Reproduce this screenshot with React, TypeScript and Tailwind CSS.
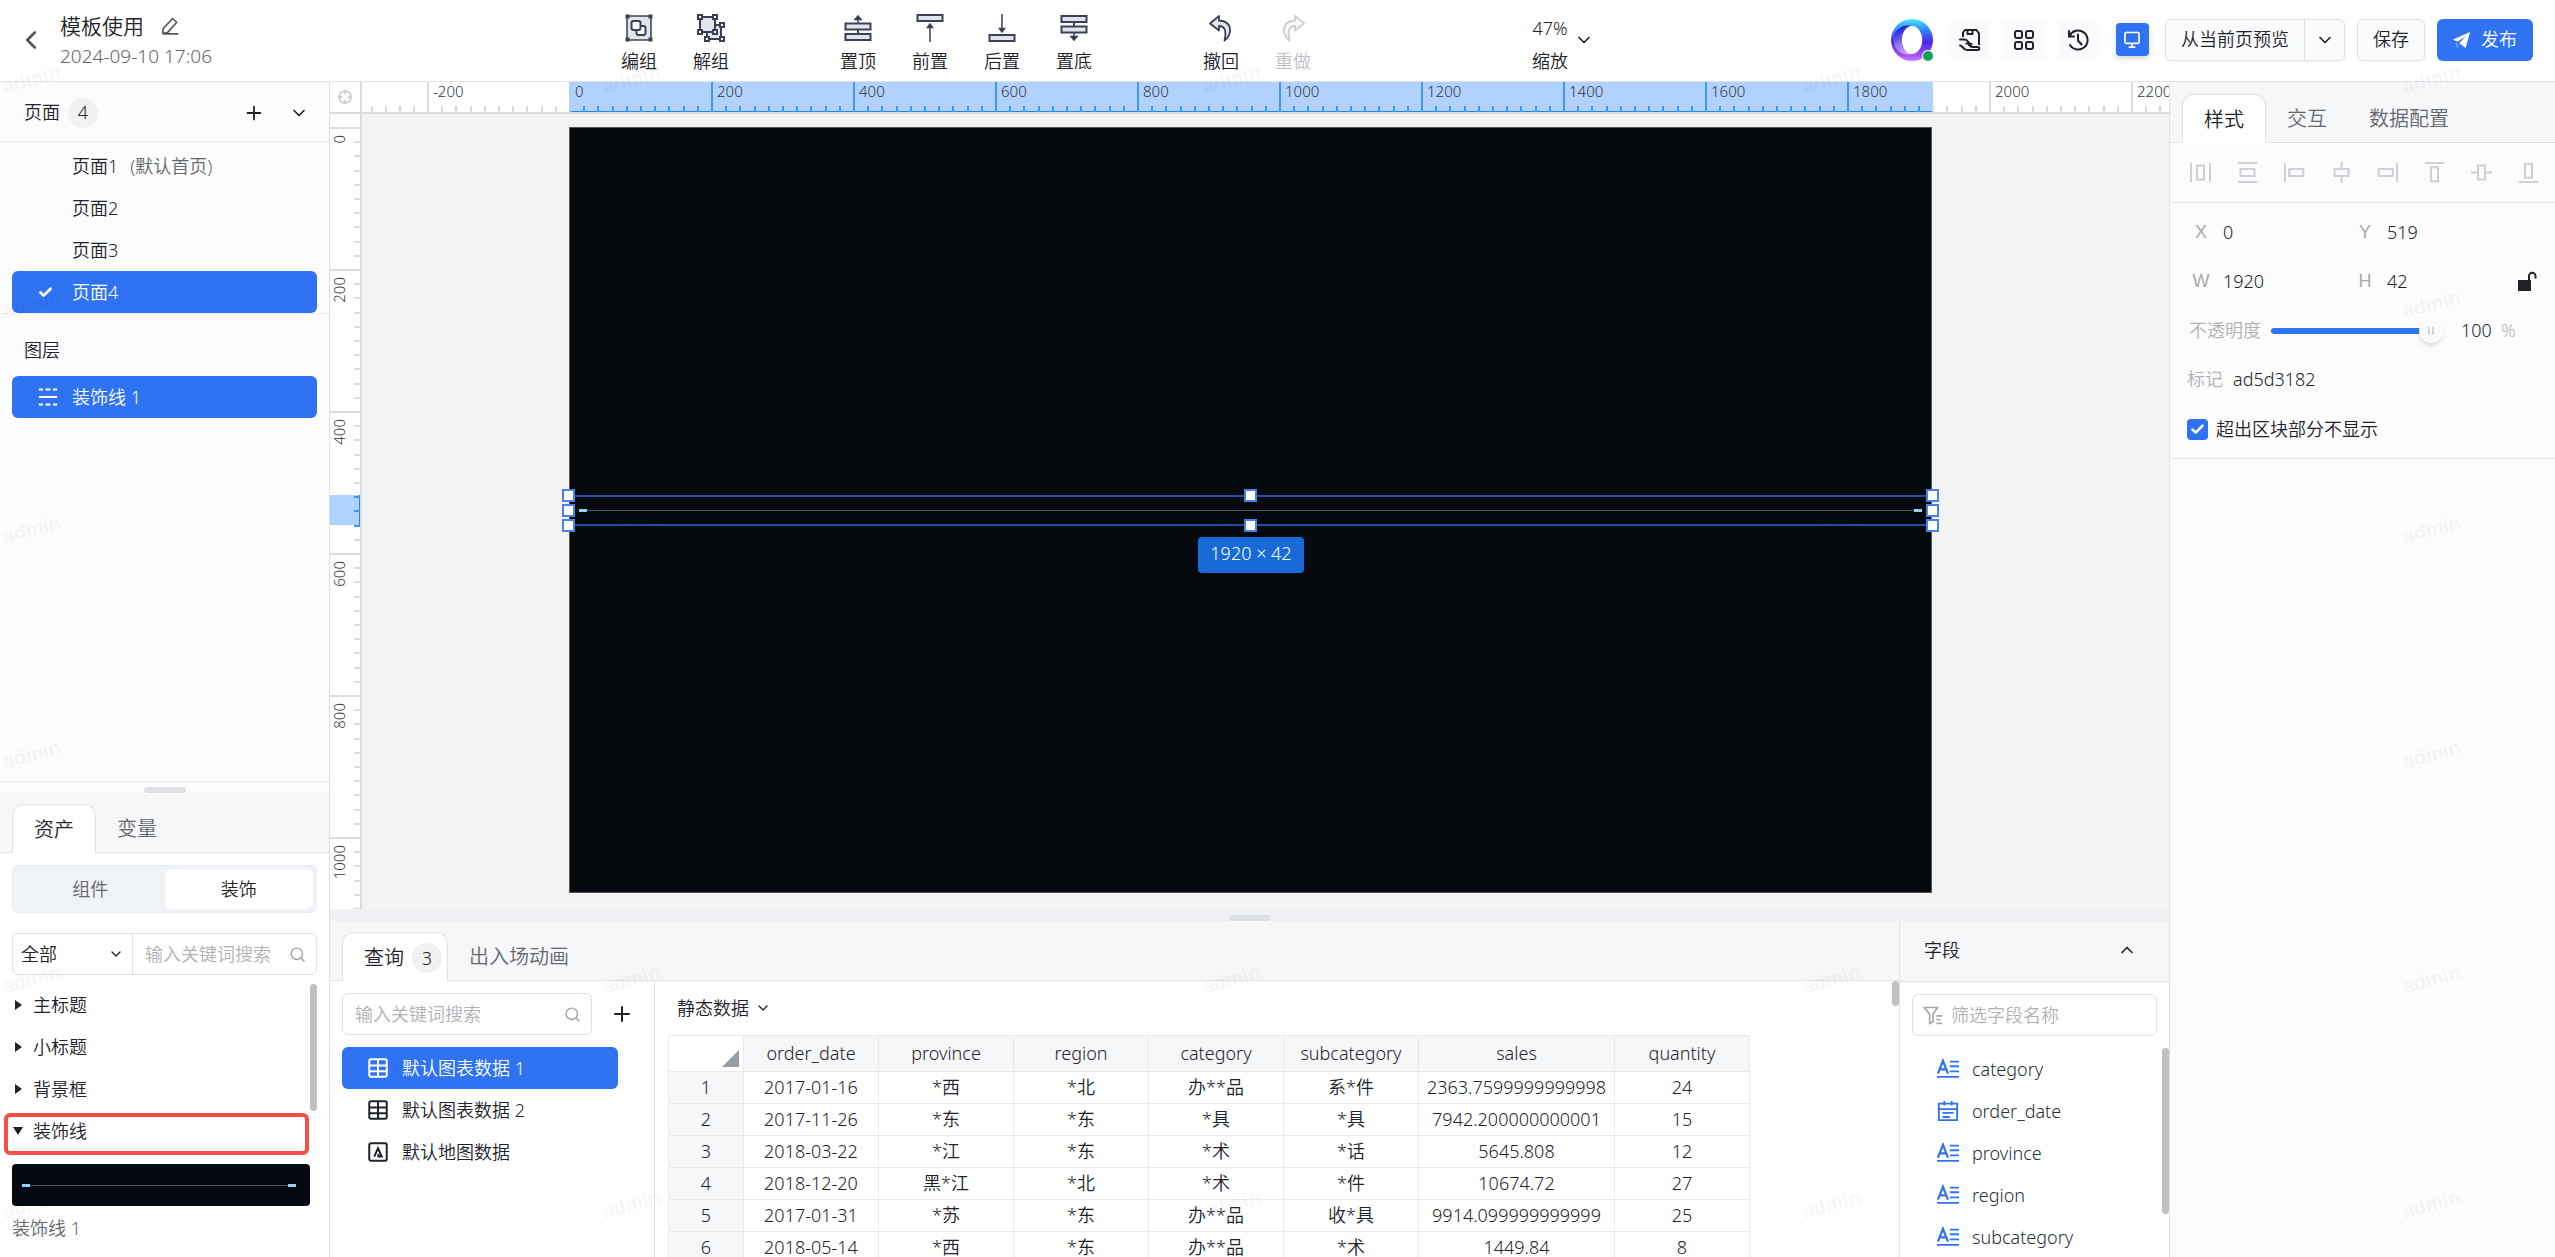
import React, { useState } from 'react';
import { Check, ChevronDown, ChevronLeft, ChevronUp, Plus, Search } from 'lucide-react';

const PAGES = ['页面1', '页面2', '页面3', '页面4'];
const CATEGORIES = ['主标题', '小标题', '背景框'];
const FIELDS = ['category', 'order_date', 'province', 'region', 'subcategory'];

const COLUMNS = ['order_date', 'province', 'region', 'category', 'subcategory', 'sales', 'quantity'];
const ROWS = [
    ['2017-01-16', '*西', '*北', '办**品', '系*件', '2363.7599999999998', '24'],
    ['2017-11-26', '*东', '*东', '*具', '*具', '7942.200000000001', '15'],
    ['2018-03-22', '*江', '*东', '*术', '*话', '5645.808', '12'],
    ['2018-12-20', '黑*江', '*北', '*术', '*件', '10674.72', '27'],
    ['2017-01-31', '*苏', '*东', '办**品', '收*具', '9914.099999999999', '25'],
    ['2018-05-14', '*西', '*东', '办**品', '*术', '1449.84', '8'],
];

interface IconProps {
    children: React.ReactNode;
    className?: string;
}

// two-tone icons of the top toolbar
const ToolIcon = ({ children, className = '' }: IconProps) => (
    <svg viewBox="0 0 28 28" className={`size-7 ${className}`} fill="#e1e4ea" stroke="#3b4056" strokeWidth="2">
        {children}
    </svg>
);

const LineIcon = ({ children, className = '' }: IconProps) => (
    <svg viewBox="0 0 24 24" className={className} fill="none" stroke="currentColor" strokeWidth="2">
        {children}
    </svg>
);

const Corner = ({ x, y, s = 4 }: { x: number; y: number; s?: number }) => (
    <rect x={x - s / 2} y={y - s / 2} width={s} height={s} fill="#3b4056" stroke="none" />
);

const Node = ({ x, y }: { x: number; y: number }) => (
    <rect x={x - 2} y={y - 2} width="4" height="4" fill="#fff" />
);

const GroupIcon = () => (
    <ToolIcon>
        <rect x="2" y="2" width="24" height="24" strokeWidth="1.5" />
        <rect x="11.5" y="12" width="9" height="9" rx="2" fill="#fff" />
        <rect x="6.5" y="7" width="9" height="9" rx="2" fill="#fff" />
        <Corner x={2.5} y={2.5} />
        <Corner x={25.5} y={2.5} />
        <Corner x={2.5} y={25.5} />
        <Corner x={25.5} y={25.5} />
    </ToolIcon>
);

const UngroupIcon = () => (
    <ToolIcon>
        <rect x="10" y="11" width="14" height="14" />
        <rect x="3" y="3" width="15" height="15" />
        <Node x={3} y={3} />
        <Node x={18} y={3} />
        <Node x={3} y={18} />
        <Node x={18} y={18} />
        <Node x={25} y={11} />
        <Node x={25} y={25} />
        <Node x={10} y={25} />
    </ToolIcon>
);

const TopIcon = () => (
    <ToolIcon>
        <path d="M14 9V3M11 5.500L14 2l3 3.500z" fill="#3b4056" strokeWidth="1.500" />
        <path d="M14 15v5" />
        <rect x="1.500" y="9.500" width="25" height="6" />
        <rect x="1.500" y="20" width="25" height="6" />
    </ToolIcon>
);

const ForwardIcon = () => (
    <ToolIcon>
        <rect x="1.500" y="1" width="25" height="6" />
        <path d="M14 28V11M11.500 13.500L14 10l2.500 3.500z" fill="#3b4056" strokeWidth="1.500" />
    </ToolIcon>
);

const BackwardIcon = () => (
    <ToolIcon>
        <rect x="1.500" y="21" width="25" height="6" />
        <path d="M14 0v17M11.500 14.500L14 18l2.500-3.500z" fill="#3b4056" strokeWidth="1.500" />
    </ToolIcon>
);

const BottomIcon = () => (
    <ToolIcon>
        <path d="M14 19v6M11 22.500l3 3.500 3-3.500z" fill="#3b4056" strokeWidth="1.500" />
        <path d="M14 8v5" />
        <rect x="1.500" y="2" width="25" height="6" />
        <rect x="1.500" y="12.500" width="25" height="6" />
    </ToolIcon>
);

const UndoIcon = ({ className = '' }: { className?: string }) => (
    <ToolIcon className={className}>
        <path
            d="M12 2L3 9.500l9 7v-4.500c5 0 8 3.500 5.500 14.500 7-5.500 9.500-19-5.500-20z"
            strokeWidth="1.800"
            strokeLinejoin="round"
        />
    </ToolIcon>
);

interface ToolProps {
    label: string;
    icon: React.ReactNode;
    disabled?: boolean;
}

const Tool = ({ label, icon, disabled }: ToolProps) => (
    <button disabled={disabled} className="flex w-18 flex-col items-center gap-1 disabled:text-[#bdbfc4]">
        {icon}
        <span className="leading-[30px]">{label}</span>
    </button>
);

const Logo = () => (
    <svg viewBox="0 0 42 42" className="mr-1 size-[42px]">
        <defs>
            <linearGradient id="ring" x1="0.5" y1="0" x2="0.5" y2="1">
                <stop offset="0" stopColor="#4fe3fb" />
                <stop offset="0.25" stopColor="#2f8df5" />
                <stop offset="0.55" stopColor="#4a23ee" />
                <stop offset="0.85" stopColor="#a34bf5" />
                <stop offset="1" stopColor="#c77dff" />
            </linearGradient>
            <linearGradient id="innerRing" x1="0.3" y1="0" x2="0.7" y2="1">
                <stop offset="0" stopColor="#1b12dd" />
                <stop offset="0.5" stopColor="#8d72ee" />
                <stop offset="1" stopColor="#e3b5fb" />
            </linearGradient>
        </defs>
        <circle cx="21" cy="21" r="21" fill="url(#ring)" />
        <circle cx="17" cy="21" r="14.500" fill="url(#innerRing)" />
        <ellipse cx="21" cy="21" rx="10" ry="14" fill="#fff" />
        <circle cx="37" cy="37" r="6" fill="#fff" />
        <circle cx="37" cy="37" r="5" fill="#0aa35c" />
    </svg>
);

const Header = () => (
    <header className="flex h-[82px] shrink-0 border-b border-[#e1e3e8] bg-white pb-0.5">
        <div className="flex w-[603px] shrink-0 items-center pl-4">
            <button aria-label="返回" className="text-[#55585e]">
                <ChevronLeft size={30} strokeWidth={2.2} />
            </button>
            <div className="ml-3.5">
                <div className="flex items-center gap-4 text-[21px] leading-8">
                    <h1>模板使用</h1>
                    <button aria-label="重命名" className="text-[#55585e]">
                        <LineIcon className="size-5">
                            <path d="M3 21l1-6L15 3l5 4.500L9 20l-6 1M3 21.500h19" strokeLinejoin="round" />
                        </LineIcon>
                    </button>
                </div>
                <p className="text-[19px] leading-7 text-[#64676d]">2024-09-10 17:06</p>
            </div>
        </div>
        <div className="flex items-start pt-3.5">
            <Tool label="编组" icon={<GroupIcon />} />
            <Tool label="解组" icon={<UngroupIcon />} />
            <div className="ml-[75px] flex">
                <Tool label="置顶" icon={<TopIcon />} />
                <Tool label="前置" icon={<ForwardIcon />} />
                <Tool label="后置" icon={<BackwardIcon />} />
                <Tool label="置底" icon={<BottomIcon />} />
            </div>
            <div className="ml-[75px] flex">
                <Tool label="撤回" icon={<UndoIcon />} />
                <Tool label="重做" icon={<UndoIcon className="-scale-x-100 opacity-25" />} disabled />
            </div>
            <button className="ml-[203px] flex items-center gap-1.5">
                <span className="flex flex-col items-center gap-1">
                    <span className="leading-7">47%</span>
                    <span className="leading-[30px]">缩放</span>
                </span>
                <ChevronDown size={20} strokeWidth={2} className="mb-2.5" />
            </button>
        </div>
        <div className="ml-auto flex items-center gap-3 pr-[22px]">
            <Logo />
            <IconButton label="素材">
                <LineIcon className="size-6">
                    <path d="M5 9V4.500L7 2h11.500L21 5.500V17M9.500 2v4h5V2" strokeLinejoin="round" />
                    <path
                        d="M2 11.500h4.500c3 0 3.500 2.500 6.500 5.500M8.500 15.500l5 .5M2 17.500c2.500 0 3.500 4.500 7 4.500h10.500c2.500 0 2.500-3 0-3H14c-1.500 0-2-1-3-2"
                        strokeLinecap="round"
                        strokeLinejoin="round"
                    />
                </LineIcon>
            </IconButton>
            <IconButton label="应用">
                <LineIcon className="size-6">
                    <rect x="3" y="3" width="7" height="7" rx="2" />
                    <rect x="14" y="3" width="7" height="7" rx="2" />
                    <rect x="3" y="14" width="7" height="7" rx="2" />
                    <rect x="14" y="14" width="7" height="7" rx="2" />
                </LineIcon>
            </IconButton>
            <IconButton label="历史">
                <LineIcon className="size-6">
                    <path d="M3.500 8A9.500 9.500 0 1 1 4 17M3 3v5.500h5M12 6.500v6l3.500 4" strokeLinecap="round" />
                </LineIcon>
            </IconButton>
            <IconButton label="大屏">
                <span className="flex size-[33px] items-center justify-center rounded bg-[#2f73f2] text-white shadow-md">
                    <LineIcon className="size-5">
                        <rect x="3.500" y="3" width="17" height="13" rx="1.500" />
                        <path d="M12 16v5M8 20.500h8" />
                    </LineIcon>
                </span>
            </IconButton>
            <div className="flex h-[42px] rounded-md border border-[#dcdfe4] bg-[#fafbfd] shadow-xs">
                <button className="w-[139px] border-r border-[#dcdfe4] text-center">从当前页预览</button>
                <button aria-label="预览选项" className="flex w-[39px] items-center justify-center">
                    <ChevronDown size={20} strokeWidth={2} />
                </button>
            </div>
            <button className="h-[42px] w-[68px] rounded-md border border-[#dcdfe4] bg-[#fafbfd] shadow-xs">保存</button>
            <button className="flex h-[42px] w-24 items-center justify-center gap-2.5 rounded-md bg-[#2f73f2] text-white shadow-xs">
                <svg viewBox="0 0 20 20" className="size-[18px]" fill="currentColor">
                    <path d="M19 1L0 9.500l5 2.500L14 6l-7 7.500 7 5.500z" />
                    <path d="M3 14l2 1M4 17.500l2-1" stroke="currentColor" strokeDasharray="2 1" />
                </svg>
                发布
            </button>
        </div>
    </header>
);

const IconButton = ({ label, children }: { label: string; children: React.ReactNode }) => (
    <button aria-label={label} className="flex size-[42px] items-center justify-center rounded-md bg-[#fafbfd]">
        {children}
    </button>
);

interface TabProps {
    active?: boolean;
    children: React.ReactNode;
}

const Tab = ({ active, children }: TabProps) => (
    <button
        className={
            active
                ? '-mb-px flex h-[49px] items-center gap-2 rounded-t-xl border border-b-0 border-[#dfe3ea] bg-white pt-0.5 pr-[5px] pl-[21px] text-[20px] nth-[1]:min-w-[84px]'
                : 'flex h-12 items-center px-[21px] pt-0.5 text-[20px] text-[#64676d]'
        }
    >
        {children}
    </button>
);

const Badge = ({ children }: { children: React.ReactNode }) => (
    <span className="flex size-[30px] items-center justify-center rounded-full bg-[#f1f1f1] text-[18px]">{children}</span>
);

const TableIcon = () => (
    <LineIcon className="size-5 shrink-0">
        <rect x="1.500" y="1.500" width="21" height="21" rx="2" strokeWidth="2.400" />
        <path d="M2 9h20M2 16h20M12 2v20" strokeWidth="2.400" />
    </LineIcon>
);

const MapIcon = () => (
    <LineIcon className="size-5 shrink-0">
        <rect x="1.500" y="1.500" width="21" height="21" rx="2" strokeWidth="2.400" />
        <path d="M7.500 17.500L12 7.500l4.500 10h-4v-3" strokeWidth="2.400" />
    </LineIcon>
);

const DecorLine = () => (
    <span className="flex w-full items-center">
        <span className="h-[3px] w-2 bg-[#9fcdf3]" />
        <span className="h-px flex-1 bg-[#435a6d]" />
        <span className="h-[3px] w-2 bg-[#9fcdf3]" />
    </span>
);

const Sidebar = () => {
    const [page, setPage] = useState('页面4');
    return (
        <aside className="flex w-[330px] shrink-0 flex-col border-r border-[#dfe1e6] bg-[#fcfcfc]">
            <div className="flex h-15 shrink-0 items-center border-b border-[#ebedf0] pt-0.5 pr-5 pl-6">
                <h2 className="mr-2">页面</h2>
                <Badge>4</Badge>
                <button aria-label="新增页面" className="ml-auto">
                    <Plus size={22} strokeWidth={2} />
                </button>
                <button aria-label="收起" className="ml-6">
                    <ChevronDown size={20} strokeWidth={2} />
                </button>
            </div>
            <ul className="mt-[3px] border-b border-[#ebedf0] px-3">
                {PAGES.map((name) => (
                    <li key={name}>
                        <button
                            onClick={() => setPage(name)}
                            className={`flex h-[42px] w-full items-center rounded-md ${page === name ? 'bg-[#2f73f2] text-white' : ''}`}
                        >
                            <span className="flex w-15 justify-center pl-1.5">
                                {page === name && <Check size={15} strokeWidth={4.5} />}
                            </span>
                            {name}
                            {name === '页面1' && <span className="ml-3 text-[#64676d]">(默认首页)</span>}
                        </button>
                    </li>
                ))}
            </ul>
            <h2 className="mt-4 px-6 leading-10">图层</h2>
            <div className="mt-1.5 min-h-0 flex-1 px-3">
                <button className="flex h-[42px] w-full items-center rounded-md bg-[#2f73f2] pl-[26px] text-white">
                    <LineIcon className="mr-3.5 size-5">
                        <path d="M1 3h5M9 3h6M18 3h5M1 12h22M1 21h5M9 21h6M18 21h5" strokeWidth="2.400" />
                    </LineIcon>
                    装饰线 1
                </button>
            </div>
            <div className="flex h-3 shrink-0 items-end justify-center border-t border-[#ebedf0]">
                <span className="h-1.5 w-[42px] rounded-sm bg-[#dde0e5]" />
            </div>
            <div className="flex h-15 shrink-0 items-end border-b border-[#dfe3ea] bg-[#f6f7f9] pl-3">
                <Tab active>资产</Tab>
                <Tab>变量</Tab>
            </div>
            <div className="h-[404px] shrink-0 overflow-hidden bg-white px-3 pt-3">
                <div className="flex h-12 rounded-md border border-[#e8ebf2] bg-[#eff2f7] p-[3px]">
                    <button className="flex-1 text-[#64676d]">组件</button>
                    <button className="flex-1 rounded-md bg-white">装饰</button>
                </div>
                <div className="mt-5 flex h-[42px] rounded-md border border-[#dfe1e6]">
                    <div className="relative w-30 border-r border-[#dfe1e6]">
                        <select aria-label="分类" className="h-full w-full appearance-none pl-2">
                            <option>全部</option>
                        </select>
                        <ChevronDown size={16} className="pointer-events-none absolute top-3 right-2" />
                    </div>
                    <input
                        aria-label="搜索资产"
                        placeholder="输入关键词搜索"
                        className="min-w-0 flex-1 pl-3 outline-none placeholder:text-[#b0b2b7]"
                    />
                    <Search size={17} className="mr-2.5 self-center text-[#a0a3a8]" />
                </div>
                <div className="mt-[9px] flex">
                    <div className="relative flex-1">
                        {CATEGORIES.map((name) => (
                            <button key={name} className="flex h-[42px] w-full items-center gap-[11px] pl-[3px]">
                                <span className="h-0 w-0 border-y-5 border-l-7 border-y-transparent border-l-[#1f2329]" />
                                {name}
                            </button>
                        ))}
                        <button className="relative flex h-[42px] w-full items-center gap-2.5 pl-px">
                            <span className="h-0 w-0 border-x-5 border-t-8 border-x-transparent border-t-[#1f2329]" />
                            装饰线
                            <span className="absolute top-[3px] right-px -left-2 h-[42px] rounded-md border-4 border-[#fa4d49]" />
                        </button>
                        <button className="mt-3 flex h-[42px] w-full items-center rounded-sm bg-[#050a12] pr-3.5 pl-2.5">
                            <DecorLine />
                        </button>
                        <p className="mt-1.5 leading-8 text-[#64676d]">装饰线 1</p>
                    </div>
                    <span className="h-[127px] w-[7px] rounded-full bg-[#c1c1c1]" />
                </div>
            </div>
        </aside>
    );
};

const H_MARKS = [-200, 0, 200, 400, 600, 800, 1000, 1200, 1400, 1600, 1800, 2000, 2200];
const V_MARKS = [0, 200, 400, 600, 800, 1000];
const STEPS = [0, 1, 2, 3, 4, 5, 6, 7, 8, 9];

const HRuler = () => (
    <div className="relative flex h-8 flex-1 overflow-hidden border-b-2 border-[#dcdcdc] bg-white">
        <span className="absolute top-0 left-[207px] h-[31px] w-[1364px] border-b-2 border-[#1b88f7] bg-[#b1d2ff]" />
        <span className="flex w-[65px] shrink-0 items-end justify-end overflow-hidden">
            {[1, 2, 3, 4].map((i) => (
                <span key={i} className="h-[6px] w-[14px] shrink-0 border-l-2 border-[#dcdcdc]" />
            ))}
        </span>
        {H_MARKS.map((mark) => (
            <span key={mark} className="relative flex w-[142px] shrink-0 items-end">
                {STEPS.map((i) => {
                    const value = mark + i * 20;
                    const on = value > 0 && value < 1920;
                    return (
                        <span
                            key={i}
                            className={`flex-1 border-l-2 ${i === 0 ? 'h-full' : 'h-[6px]'} ${
                                on ? 'border-[#3d98f8]' : value === 0 ? 'border-[#b1d2ff]' : 'border-[#dcdcdc]'
                            }`}
                        />
                    );
                })}
                <span className="absolute top-0 left-1.5 text-[15px] leading-[18px] text-[#33363b]">{mark}</span>
            </span>
        ))}
    </div>
);

const VRuler = () => (
    <div className="relative flex w-8 shrink-0 flex-col overflow-hidden border-r-2 border-[#dcdcdc] bg-white">
        <span className="absolute top-[381px] left-0 h-[30px] w-[31px] border-r-2 border-[#1b88f7] bg-[#b1d2ff]" />
        <span className="h-[13px] shrink-0" />
        {V_MARKS.map((mark) => (
            <span key={mark} className="relative flex h-[142px] shrink-0 flex-col items-end">
                {STEPS.map((i) => {
                    const value = mark + i * 20;
                    return (
                        <span
                            key={i}
                            className={`flex-1 border-t-2 ${i === 0 ? 'w-full' : 'w-[6px]'} ${
                                value >= 519 && value <= 561 ? 'border-[#3d98f8]' : 'border-[#dcdcdc]'
                            }`}
                        />
                    );
                })}
                <span className="absolute top-2 left-0 w-[18px] rotate-180 text-[15px] leading-[18px] text-[#33363b] [writing-mode:vertical-rl]">
                    {mark}
                </span>
            </span>
        ))}
    </div>
);

const Handle = ({ className }: { className: string }) => (
    <span className={`absolute size-[13px] border-2 border-[#4a80ec] bg-white ${className}`} />
);

const Stage = () => (
    <div className="flex min-h-0 flex-1 flex-col bg-[#f4f4f4]">
        <div className="flex shrink-0">
            <div className="flex h-8 w-8 shrink-0 items-center justify-center border-r-2 border-b-2 border-[#dcdcdc] bg-white">
                <LineIcon className="size-4 text-[#c3c5c9]">
                    <circle cx="12" cy="12" r="9" />
                    <path d="M12 2v6M12 16v6M2 12h6M16 12h6" />
                </LineIcon>
            </div>
            <HRuler />
        </div>
        <div className="flex min-h-0 flex-1">
            <VRuler />
            <div className="relative min-w-0 flex-1 overflow-hidden">
                <div className="absolute top-[13px] left-[207px] h-[766px] w-[1363px] border border-[#555] bg-[#060a0f]">
                    <div className="absolute top-[367px] -left-px flex h-[31px] w-[1363px] items-center border-y-2 border-[#1f4da3] px-2.5">
                        <DecorLine />
                        <Handle className="-top-2 -left-[7px]" />
                        <Handle className="top-[7px] -left-[7px]" />
                        <Handle className="-bottom-2 -left-[7px]" />
                        <Handle className="-top-2 left-[675px]" />
                        <Handle className="-bottom-2 left-[675px]" />
                        <Handle className="-top-2 -right-[7px]" />
                        <Handle className="top-[7px] -right-[7px]" />
                        <Handle className="-right-[7px] -bottom-2" />
                        <span className="absolute top-10 left-[629px] h-9 w-[106px] rounded-sm bg-[#176bd8] text-center leading-8 text-white">
                            1920 × 42
                        </span>
                    </div>
                </div>
            </div>
        </div>
    </div>
);

const QUERIES = [
    { name: '默认图表数据 1', icon: <TableIcon /> },
    { name: '默认图表数据 2', icon: <TableIcon /> },
    { name: '默认地图数据', icon: <MapIcon /> },
];

const QueryPanel = () => {
    const [query, setQuery] = useState('默认图表数据 1');
    return (
        <section className="flex min-w-0 flex-1 flex-col bg-white">
            <div className="flex h-15 shrink-0 items-end border-b border-[#dfe3ea] bg-[#f6f7f9] pl-3">
                <Tab active>
                    查询 <Badge>3</Badge>
                </Tab>
                <Tab>出入场动画</Tab>
            </div>
            <div className="flex min-h-0 flex-1">
                <div className="w-[325px] shrink-0 border-r border-[#dfe1e6] px-3 pt-3">
                    <div className="flex items-center">
                        <div className="flex h-[42px] w-[250px] items-center rounded-md border border-[#dfe1e6]">
                            <input
                                aria-label="搜索查询"
                                placeholder="输入关键词搜索"
                                className="min-w-0 flex-1 pl-3 outline-none placeholder:text-[#b0b2b7]"
                            />
                            <Search size={17} className="mr-2.5 text-[#a0a3a8]" />
                        </div>
                        <button aria-label="新增查询" className="ml-[18px]">
                            <Plus size={24} strokeWidth={2} />
                        </button>
                    </div>
                    <ul className="mt-3 w-[276px]">
                        {QUERIES.map(({ name, icon }) => (
                            <li key={name}>
                                <button
                                    onClick={() => setQuery(name)}
                                    className={`flex h-[42px] w-full items-center gap-3.5 rounded-md pl-[26px] ${
                                        query === name ? 'bg-[#2f73f2] text-white' : ''
                                    }`}
                                >
                                    {icon}
                                    {name}
                                </button>
                            </li>
                        ))}
                    </ul>
                </div>
                <div className="min-w-0 flex-1 overflow-hidden pt-[9px] pl-[13px]">
                    <button className="flex items-center gap-1.5 pl-[9px] leading-9">
                        静态数据 <ChevronDown size={16} />
                    </button>
                    <table className="mt-[9px] w-[1081px] table-fixed border-collapse text-center">
                        <colgroup>
                            <col className="w-[75px]" />
                            {COLUMNS.map((name) => (
                                <col key={name} className={name === 'sales' ? 'w-[196px]' : 'w-[135px]'} />
                            ))}
                        </colgroup>
                        <thead>
                            <tr className="h-9">
                                <th className="border border-[#e9eaee] bg-white p-1 align-bottom">
                                    <span className="ml-auto block h-0 w-0 border-b-17 border-l-17 border-b-[#979da5] border-l-transparent" />
                                </th>
                                {COLUMNS.map((name) => (
                                    <th key={name} className="border border-[#e9eaee] bg-[#f6f7f9] font-[350]">
                                        {name}
                                    </th>
                                ))}
                            </tr>
                        </thead>
                        <tbody>
                            {ROWS.map((row, i) => (
                                <tr key={i} className="h-8">
                                    <td className="border border-[#e9eaee] bg-[#f6f7f9]">{i + 1}</td>
                                    {row.map((cell, j) => (
                                        <td key={j} className="border border-[#e9eaee] whitespace-nowrap">
                                            {cell}
                                        </td>
                                    ))}
                                </tr>
                            ))}
                        </tbody>
                    </table>
                </div>
                <span className="h-[25px] w-[7px] shrink-0 rounded-full bg-[#c1c1c1]" />
            </div>
        </section>
    );
};

const FieldPanel = () => (
    <section className="flex w-[270px] shrink-0 flex-col border-l border-[#dfe1e6] bg-white">
        <div className="flex h-[61px] shrink-0 items-center border-b border-[#dfe1e6] bg-[#f6f7f9] pr-8 pb-0.5 pl-6">
            <h2>字段</h2>
            <button aria-label="收起字段" className="ml-auto">
                <ChevronUp size={20} strokeWidth={2} />
            </button>
        </div>
        <div className="m-3 flex h-[42px] shrink-0 items-center rounded-md border border-[#dfe1e6] pl-2.5">
            <LineIcon className="size-5 text-[#a6a9ae]">
                <path d="M1.500 3h16l-5.500 8v9l-4 2V11z" />
                <path d="M16 13h7M16 17.500h5M16 22h7" />
            </LineIcon>
            <input
                aria-label="筛选字段名称"
                placeholder="筛选字段名称"
                className="min-w-0 flex-1 pl-2 outline-none placeholder:text-[#b0b2b7]"
            />
        </div>
        <div className="flex min-h-0 flex-1 overflow-hidden">
            <ul className="flex-1">
                {FIELDS.map((name) => (
                    <li key={name} className="flex h-[42px] items-center gap-[13px] pl-[37px] text-[#2b2f36]">
                        {name === 'order_date' ? (
                            <LineIcon className="size-[22px] text-[#2f73f2]">
                                <path d="M2 4h20v18H2zM2 10h20M8 1v5M16 1v5M6 14h12M6 18.500h8" />
                            </LineIcon>
                        ) : (
                            <LineIcon className="size-[22px] text-[#2f73f2]">
                                <path d="M1 17L6.500 3 12 17M3 12.500h7" strokeWidth="2.400" />
                                <path d="M14 4h10M14 9h10M14 14.500h10M0 20.500h24" />
                            </LineIcon>
                        )}
                        {name}
                    </li>
                ))}
            </ul>
            <span className="h-[166px] w-[7px] rounded-full bg-[#c1c1c1]" />
        </div>
    </section>
);

const ALIGN_ICONS = [
    { label: '水平分布', d: 'M1 1v22M23 1v22M8 4h8v16H8z' },
    { label: '垂直分布', d: 'M1 1h22M1 23h22M4 8h16v8H4z' },
    { label: '左对齐', d: 'M1 1v22M6 8h16v8H6z' },
    { label: '水平居中', d: 'M12 0v8M12 16v8M4 8h16v8H4z' },
    { label: '右对齐', d: 'M23 1v22M2 8h16v8H2z' },
    { label: '顶对齐', d: 'M1 1h22M8 6h8v16H8z' },
    { label: '垂直居中', d: 'M0 12h8M16 12h8M8 4h8v16H8z' },
    { label: '底对齐', d: 'M1 23h22M8 2h8v16H8z' },
];

const NumberField = ({ label, value }: { label: string; value: string }) => (
    <label className="flex w-[164px] items-center">
        <span className="w-6 text-center font-['Liberation_Sans'] text-[#a6a8ad]">{label}</span>
        <input defaultValue={value} className="ml-2.5 w-20 outline-none" />
    </label>
);

const Inspector = () => {
    const [opacity, setOpacity] = useState(100);
    return (
        <aside className="w-[386px] shrink-0 border-l border-[#dfe1e6] bg-[#fcfcfc]">
            <div className="flex h-[61px] items-end border-b border-[#dfe3ea] bg-[#f6f7f9] pl-3">
                <Tab active>样式</Tab>
                <Tab>交互</Tab>
                <Tab>数据配置</Tab>
            </div>
            <div className="flex h-15 items-center justify-between border-b border-[#dfe3ea] px-4 pl-5 text-[#cdd0d6]">
                {ALIGN_ICONS.map(({ label, d }) => (
                    <button key={label} aria-label={label}>
                        <LineIcon className="size-[21px]">
                            <path d={d} strokeWidth="2.400" />
                        </LineIcon>
                    </button>
                ))}
            </div>
            <div className="flex h-64 flex-col justify-between border-b border-[#dfe3ea] px-[17px] py-[13px]">
                <div className="flex h-8 items-center pl-0.5">
                    <NumberField label="X" value="0" />
                    <NumberField label="Y" value="519" />
                </div>
                <div className="flex h-8 items-center pl-0.5">
                    <NumberField label="W" value="1920" />
                    <NumberField label="H" value="42" />
                    <button aria-label="锁定比例">
                        <svg viewBox="0 0 20 20" className="size-5">
                            <path d="M1 9h13v11H1z" fill="#1f2329" />
                            <path d="M12 9V5a3 3 0 0 1 6.500 0v2.500" fill="none" stroke="#1f2329" strokeWidth="2" />
                        </svg>
                    </button>
                </div>
                <div className="flex h-8 items-center pl-0.5">
                    <label htmlFor="opacity" className="text-[#b0b2b7]">不透明度</label>
                    <div className="relative ml-2.5 flex items-center">
                        <input
                            id="opacity"
                            type="range"
                            value={opacity}
                            onChange={(e) => setOpacity(Number(e.target.value))}
                            className="h-6 w-[172px] appearance-none bg-transparent [&::-webkit-slider-runnable-track]:h-1.5 [&::-webkit-slider-runnable-track]:rounded-full [&::-webkit-slider-runnable-track]:bg-[linear-gradient(90deg,#2f73f2_90%,transparent_90%)] [&::-webkit-slider-thumb]:-mt-[9px] [&::-webkit-slider-thumb]:size-6 [&::-webkit-slider-thumb]:appearance-none [&::-webkit-slider-thumb]:rounded-full [&::-webkit-slider-thumb]:bg-[#fafbfc] [&::-webkit-slider-thumb]:shadow-md"
                        />
                        <span className="pointer-events-none absolute right-[9px] h-2 w-1.5 border-x-2 border-[#d3d6da]" />
                    </div>
                    <input aria-label="不透明度数值" value={opacity} readOnly className="ml-[18px] w-10 outline-none" />
                    <span className="text-[#b0b2b7]">%</span>
                </div>
                <label className="flex h-8 items-center">
                    <span className="text-[#b0b2b7]">标记</span>
                    <input defaultValue="ad5d3182" className="ml-2.5 w-40 outline-none" />
                </label>
                <label className="flex h-8 items-center gap-2">
                    <span className="relative flex">
                        <input type="checkbox" defaultChecked className="size-[21px] appearance-none rounded-sm bg-[#2f73f2]" />
                        <Check size={15} strokeWidth={4} className="absolute top-[3px] left-[3px] text-white" />
                    </span>
                    超出区块部分不显示
                </label>
            </div>
        </aside>
    );
};

const Watermark = () => (
    <div
        aria-hidden="true"
        className="pointer-events-none absolute inset-0 grid auto-rows-[225px] grid-cols-[repeat(5,600px)] overflow-hidden"
    >
        {Array.from({ length: 30 }, (_, i) => (
            <span key={i} className="flex pt-[67px] pl-0.5">
                <span className="h-6 -rotate-15 font-['Liberation_Sans'] text-[20px] leading-6 font-bold text-black/5">
                    admin
                </span>
            </span>
        ))}
    </div>
);

const App: React.FC = () => (
    <div className="relative flex h-screen flex-col overflow-hidden font-['Noto_Sans','Noto_Sans_CJK_SC',sans-serif] text-[18px] font-[350] text-[#1f2329]">
        <Header />
        <div className="flex min-h-0 flex-1">
            <Sidebar />
            <main className="flex min-w-0 flex-1 flex-col">
                <Stage />
                <div className="flex h-3 shrink-0 items-end justify-center bg-[#eff1f5]">
                    <span className="h-1.5 w-[42px] rounded-sm bg-[#dde0e5]" />
                </div>
                <div className="flex h-[336px] shrink-0">
                    <QueryPanel />
                    <FieldPanel />
                </div>
            </main>
            <Inspector />
        </div>
        <Watermark />
    </div>
);

export default App;
